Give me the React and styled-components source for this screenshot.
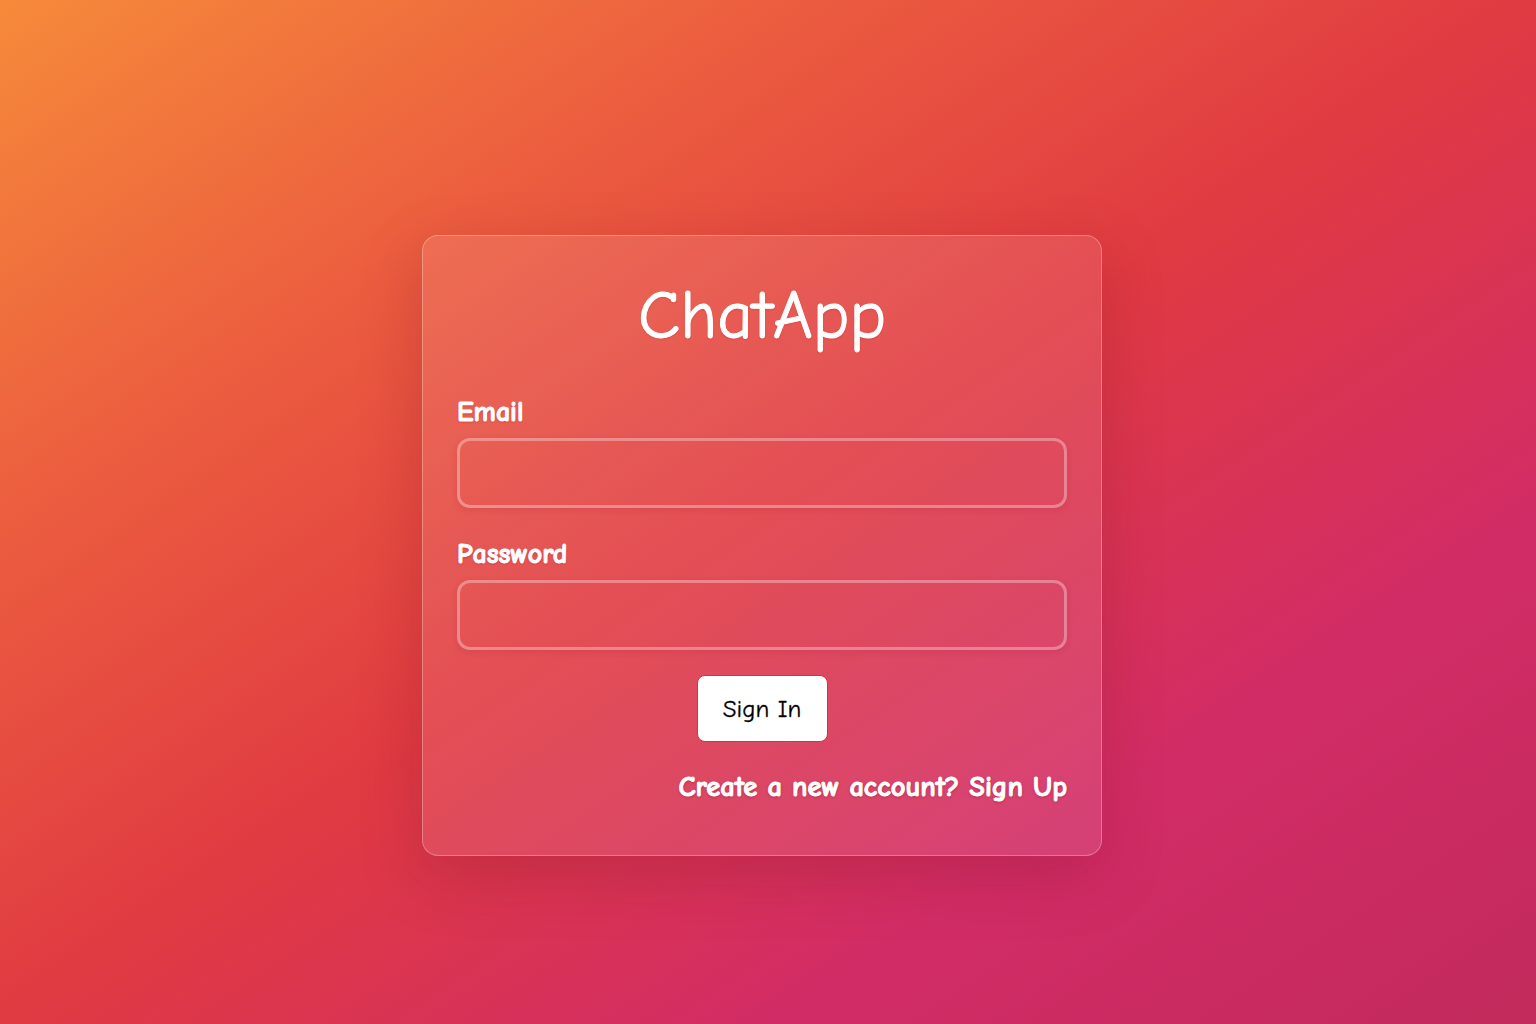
import styled, { createGlobalStyle } from "styled-components";

const GlobalStyle = createGlobalStyle`
  * {
    box-sizing: border-box;
  }
  body {
    margin: 0;
    font-family: "Comic Sans MS", "Comic Neue", "Noto Sans", sans-serif;
  }
`;

export default function App() {
  return (
    <>
      <GlobalStyle />
      <Page>
        <Card>
          <Title>ChatApp</Title>
          <Field>
            <Label htmlFor="email">Email</Label>
            <Input id="email" type="email" />
          </Field>
          <Field>
            <Label htmlFor="password">Password</Label>
            <Input id="password" type="password" />
          </Field>
          <Button>Sign In</Button>
          <SignUp>Create a new account? Sign Up</SignUp>
        </Card>
      </Page>
    </>
  );
}

const Page = styled.main`
  width: 100vw;
  height: 100vh;
  display: flex;
  justify-content: center;
  align-items: flex-start;
  padding: 235px 12px 0 0;
  background: linear-gradient(
    to bottom right,
    #f68a3a 0%,
    #ec5e3f 25%,
    #e03a42 50%,
    #d22c66 75%,
    #c22a5c 100%
  );
  overflow: hidden;
`;

//------------------CARD------------------//

const Card = styled.section`
  width: 680px;
  height: 621px;
  padding: 38px 34px 0;
  display: flex;
  flex-direction: column;
  border-radius: 16px;
  background: rgba(255, 255, 255, 0.1);
  border: 1px solid rgba(255, 255, 255, 0.28);
  box-shadow: 0 20px 60px rgba(120, 20, 30, 0.25);
`;

const Title = styled.h1`
  margin: 0 0 36px;
  text-align: center;
  font-size: 69px;
  font-weight: normal;
  line-height: 84px;
  color: #ffffff;
  -webkit-text-stroke: 1px #ffffff;
  text-shadow: 0 1px 2px rgba(160, 20, 30, 0.35);
`;

const Field = styled.div`
  display: flex;
  flex-direction: column;

  & + & {
    margin-top: 28px;
  }
`;

const Label = styled.label`
  color: #ffffff;
  font-size: 28px;
  font-weight: bold;
  line-height: 36px;
  margin-bottom: 8px;
  -webkit-text-stroke: 1px #ffffff;
  text-shadow: 0 1px 2px rgba(160, 20, 30, 0.5);
`;

const Input = styled.input`
  height: 70px;
  width: 100%;
  border: 3px solid rgba(255, 255, 255, 0.32);
  border-radius: 13px;
  background: transparent;
  box-shadow: 0 2px 6px rgba(150, 20, 40, 0.15);
  outline: none;
  color: #ffffff;
  font-size: 22px;
  padding: 0 16px;
  font-family: inherit;
`;

const Button = styled.button`
  align-self: center;
  width: 131px;
  height: 67px;
  margin-top: 25px;
  background: #ffffff;
  color: #000000;
  border: 1px solid #f0243c;
  border-radius: 8px;
  font-family: inherit;
  font-size: 25px;
  -webkit-text-stroke: 0.3px #000000;
  cursor: pointer;
`;

const SignUp = styled.a`
  align-self: flex-end;
  margin-top: 27px;
  color: #ffffff;
  font-size: 28.5px;
  font-weight: bold;
  line-height: 36px;
  cursor: pointer;
  -webkit-text-stroke: 1px #ffffff;
  text-shadow: 0 1px 3px rgba(150, 20, 40, 0.6);
`;
